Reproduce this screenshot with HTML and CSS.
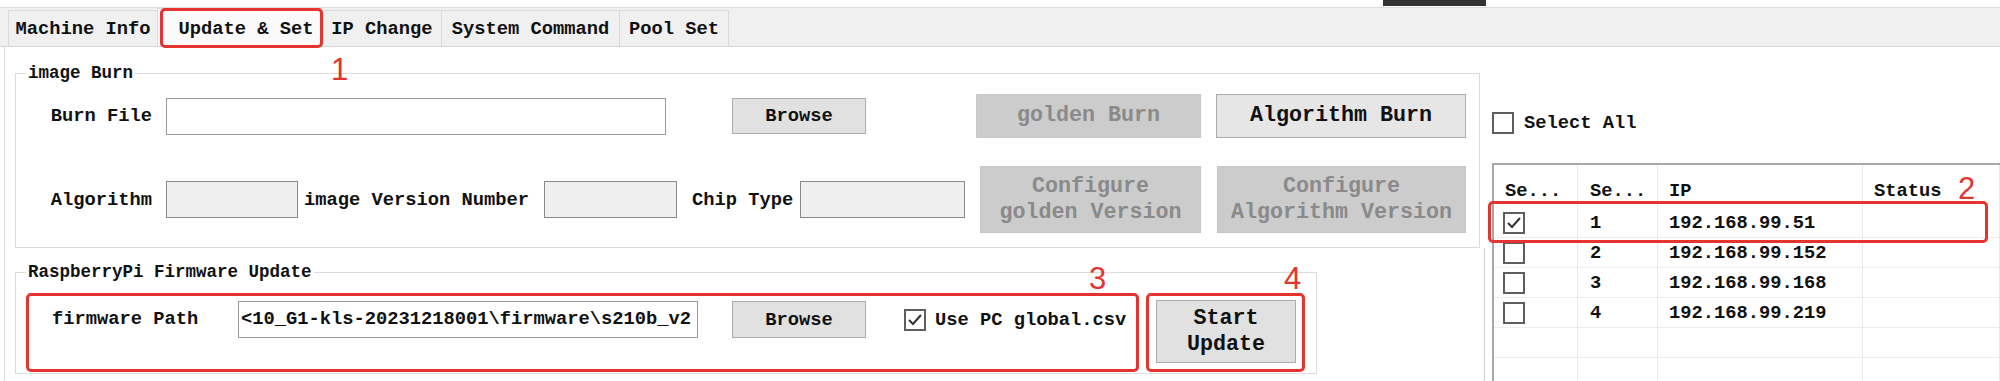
FILE: index.html
```html
<!DOCTYPE html>
<html lang="en">
<head>
    <meta charset="UTF-8">
    <title>Update &amp; Set</title>
    <link rel="stylesheet" href="styles.css">
</head>
<body>

<div class="topstrip"><div class="topstrip-block"></div></div>

<!-- tab headers -->
<div class="tabs">
    <div class="tab tab-machine">Machine Info</div>
    <div class="tab tab-update active">Update &amp; Set</div>
    <div class="tab tab-ip">IP Change</div>
    <div class="tab tab-system">System Command</div>
    <div class="tab tab-pool">Pool Set</div>
</div>

<div class="main">
    <div class="page">
        <!-- image Burn -->
        <fieldset class="group group-burn">
            <legend>image Burn</legend>
            <div class="row row-file">
                <span class="field-label">Burn File</span>
                <div class="input input-file"></div>
                <button class="btn btn-browse">Browse</button>
                <button class="btn btn-big btn-off btn-golden">golden Burn</button>
                <button class="btn btn-big btn-algo">Algorithm Burn</button>
            </div>
            <div class="row row-version">
                <span class="field-label">Algorithm</span>
                <div class="input input-off input-algo"></div>
                <span class="inline-label lbl-image">image Version Number</span>
                <div class="input input-off input-image"></div>
                <span class="inline-label lbl-chip">Chip Type</span>
                <div class="input input-off input-chip"></div>
                <button class="btn btn-big btn-off btn-cfg-golden">Configure<br>golden Version</button>
                <button class="btn btn-big btn-off btn-cfg-algo">Configure<br>Algorithm Version</button>
            </div>
        </fieldset>

        <!-- firmware update -->
        <div class="lower">
            <fieldset class="group group-fw">
                <legend>RaspberryPi Firmware Update</legend>
                <div class="row row-fw">
                    <span class="fw-label">firmware Path</span>
                    <div class="input input-path">&lt;10_G1-kls-20231218001\firmware\s210b_v2</div>
                    <button class="btn btn-browse btn-browse-fw">Browse</button>
                    <label class="check check-csv">
                        <span class="box"><svg viewBox="0 0 18 18"><polyline points="3,9 7,13 15,4"/></svg></span>
                        Use PC global.csv
                    </label>
                    <button class="btn btn-big btn-start">Start<br>Update</button>
                </div>
            </fieldset>
        </div>
    </div>

    <!-- miner list -->
    <div class="side">
        <label class="check select-all"><span class="box"></span>Select All</label>
        <div class="grid">
            <div class="grid-row grid-head">
                <div class="cell">Se...</div>
                <div class="cell">Se...</div>
                <div class="cell">IP</div>
                <div class="cell">Status</div>
            </div>
            <div class="grid-row">
                <div class="cell"><span class="box"><svg viewBox="0 0 18 18"><polyline points="3,9 7,13 15,4"/></svg></span></div>
                <div class="cell">1</div>
                <div class="cell">192.168.99.51</div>
                <div class="cell"></div>
            </div>
            <div class="grid-row">
                <div class="cell"><span class="box"></span></div>
                <div class="cell">2</div>
                <div class="cell">192.168.99.152</div>
                <div class="cell"></div>
            </div>
            <div class="grid-row">
                <div class="cell"><span class="box"></span></div>
                <div class="cell">3</div>
                <div class="cell">192.168.99.168</div>
                <div class="cell"></div>
            </div>
            <div class="grid-row">
                <div class="cell"><span class="box"></span></div>
                <div class="cell">4</div>
                <div class="cell">192.168.99.219</div>
                <div class="cell"></div>
            </div>
            <div class="grid-row">
                <div class="cell"></div><div class="cell"></div><div class="cell"></div><div class="cell"></div>
            </div>
            <div class="grid-row">
                <div class="cell"></div><div class="cell"></div><div class="cell"></div><div class="cell"></div>
            </div>
        </div>
    </div>
</div>

<!-- red annotations drawn over the screenshot -->
<div class="mark mark-1"></div>
<div class="mark mark-2"></div>
<div class="mark mark-3"></div>
<div class="mark mark-4"></div>
<div class="num num-1">1</div>
<div class="num num-2">2</div>
<div class="num num-3">3</div>
<div class="num num-4">4</div>

</body>
</html>
```

FILE: styles.css
```css
body {
    margin: 0;
    width: 2000px;
    height: 381px;
    overflow: hidden;
    position: relative;
    background: #fff;
    font-family: "Liberation Mono", monospace;
    font-size: 18.75px;
    font-weight: bold;
    color: #111;
}

/* strip above the tabs */
.topstrip {
    height: 7px;
    border-bottom: 1px solid #dedede;
}
.topstrip-block {
    width: 103px;
    height: 6px;
    margin-left: 1383px;
    background: #333;
}

/* tabs */
.tabs {
    display: flex;
    align-items: flex-end;
    height: 38px;
    padding-left: 8px;
    background: #f0f0f0;
    border-bottom: 1px solid #d6d6d6;
}
.tab {
    height: 36px;
    box-sizing: border-box;
    display: flex;
    align-items: center;
    justify-content: center;
    border: 1px solid #dadada;
    border-bottom: none;
    margin-right: -1px;
    background: #f0f0f0;
}
.tab.active {
    height: 38px;
    background: #fafafa;
    padding-top: 2px;
}
.tab-machine { width: 150px; }
.tab-update { width: 166px; padding-left: 12px; }
.tab-ip { width: 120px; }
.tab-system { width: 179px; }
.tab-pool { width: 110px; }

.main {
    display: flex;
    height: 334px;
}

/* left page */
.page {
    width: 1470px;
    margin-left: 4px;
    border-left: 1px solid #dadada;
    padding-left: 10px;
    display: flex;
    flex-direction: column;
}
.group {
    margin: 0;
    padding: 0;
    border: 1px solid #dcdcdc;
    min-width: 0;
}
.group legend {
    margin-left: 10px;
    padding: 0 2px;
    line-height: 22px;
    font-size: 17.5px;
}
.group-burn {
    width: 1465px;
    box-sizing: border-box;
    margin-top: 15px;
    padding-bottom: 14px;
}
.row {
    display: flex;
    align-items: center;
}
.row-file {
    height: 44px;
    margin-top: 10px;
}
.row-version {
    height: 67px;
    margin-top: 28px;
}
.field-label {
    width: 136px;
    margin-right: 14px;
    text-align: right;
    flex-shrink: 0;
}
.inline-label {
    flex-shrink: 0;
    white-space: nowrap;
}
.lbl-image { width: 225px; margin-left: 6px; }
.lbl-chip { width: 101px; margin-left: 15px; }

.input {
    height: 37px;
    box-sizing: border-box;
    border: 1px solid #9c9c9c;
    background: #fff;
    flex-shrink: 0;
}
.input-off {
    background: #efefef;
    border-color: #8a8a8a;
}
.input-file { width: 500px; }
.input-algo { width: 132px; }
.input-image { width: 133px; margin-left: 15px; }
.input-chip { width: 165px; margin-left: 7px; }

.btn {
    font-family: inherit;
    font-weight: bold;
    font-size: 18.75px;
    color: #111;
    background: #e1e1e1;
    border: 1px solid #adadad;
    padding: 0;
    flex-shrink: 0;
}
.btn-big {
    font-size: 21.7px;
    line-height: 26px;
}
.btn-off {
    background: #cccccc;
    border-color: #c6c6c6;
    color: #8a8a8a;
}
.btn-browse { width: 134px; height: 36px; margin-left: 66px; }
.btn-golden { width: 225px; height: 44px; margin-left: 110px; }
.btn-algo { width: 250px; height: 44px; margin-left: 15px; background: #e6e6e6; }
.btn-cfg-golden { width: 221px; height: 67px; margin-left: 15px; }
.btn-cfg-algo { width: 249px; height: 67px; margin-left: 16px; }

/* firmware update */
.lower {
    flex: 1;
    width: 1469px;
    border-right: 1px solid #cfcfcf;
}
.group-fw {
    width: 1302px;
    box-sizing: border-box;
    margin-top: 13px;
    padding-bottom: 10px;
}
.row-fw {
    align-items: flex-start;
    height: 63px;
    margin-top: 17px;
}
.fw-label {
    width: 186px;
    margin-left: 36px;
    margin-top: 1px;
    line-height: 37px;
    flex-shrink: 0;
}
.input-path {
    width: 460px;
    margin-top: 1px;
    padding-left: 2px;
    line-height: 35px;
    white-space: nowrap;
    overflow: hidden;
}
.btn-browse-fw {
    margin-left: 34px;
    margin-top: 1px;
    height: 37px;
}
.check {
    display: flex;
    align-items: center;
}
.check-csv {
    width: 252px;
    height: 37px;
    margin-left: 38px;
    margin-top: 1px;
    flex-shrink: 0;
}
.box {
    width: 22px;
    height: 22px;
    box-sizing: border-box;
    border: 2px solid #5e5e5e;
    background: #fff;
    display: inline-block;
    flex-shrink: 0;
}
.box svg {
    display: block;
    width: 18px;
    height: 18px;
}
.box polyline {
    fill: none;
    stroke: #333;
    stroke-width: 2;
}
.check-csv .box { margin-right: 9px; }
.btn-start { width: 140px; height: 63px; }

/* right side list */
.side {
    flex: 1;
    padding-left: 7px;
}
.select-all {
    height: 22px;
    margin-top: 65px;
}
.select-all .box { margin-right: 10px; }
.grid {
    margin-top: 29px;
    border-top: 2px solid #a8a8a8;
    border-left: 2px solid #a8a8a8;
}
.grid-row {
    display: grid;
    grid-template-columns: 84px 80px 205px 1fr;
    height: 30px;
}
.grid-head {
    height: 43px;
}
.cell {
    border-right: 1px solid #e8e8e8;
    border-bottom: 1px solid #ececec;
    padding-left: 11px;
    display: flex;
    align-items: center;
    white-space: nowrap;
    font-size: 18.75px;
}
.grid-head .cell {
    border-bottom: none;
    padding-top: 8px;
}
.grid-row .cell:first-child { padding-left: 9px; }
.grid-head .cell:first-child { padding-left: 11px; }
.grid-row .cell:nth-child(2) { padding-left: 12px; }

/* annotations */
.mark {
    position: absolute;
    border: 3px solid #e5332f;
    border-radius: 5px;
    box-sizing: border-box;
}
.mark-1 { left: 160px; top: 8px; width: 163px; height: 40px; }
.mark-2 { left: 1488px; top: 201px; width: 500px; height: 42px; }
.mark-3 { left: 26px; top: 293px; width: 1113px; height: 79px; }
.mark-4 { left: 1146px; top: 293px; width: 159px; height: 79px; }
.num {
    position: absolute;
    font-family: "Liberation Sans", sans-serif;
    font-weight: normal;
    font-size: 31px;
    line-height: 31px;
    color: #e5332f;
}
.num-1 { left: 331px; top: 54px; }
.num-2 { left: 1958px; top: 173px; }
.num-3 { left: 1089px; top: 263px; }
.num-4 { left: 1284px; top: 263px; }
```
